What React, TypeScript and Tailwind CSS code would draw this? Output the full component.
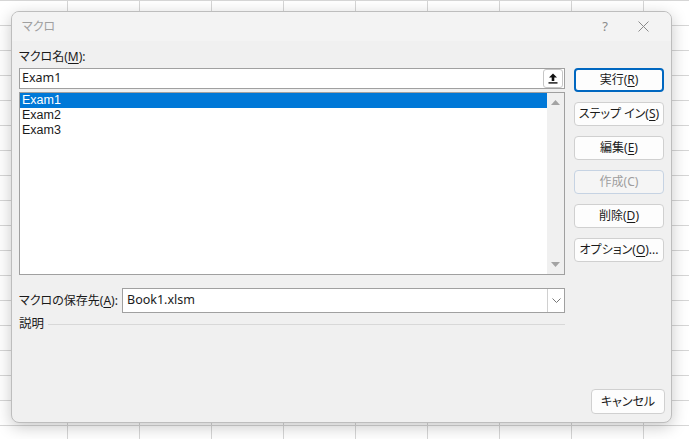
import React from 'react';

const MACROS = ['Exam1', 'Exam2', 'Exam3'];

const BUTTONS: { label: string; key?: string; tail?: string; disabled?: boolean; primary?: boolean }[] = [
  { label: '実行(', key: 'R', tail: ')', primary: true },
  { label: 'ステップ イン(', key: 'S', tail: ')' },
  { label: '編集(', key: 'E', tail: ')' },
  { label: '作成(C)', disabled: true },
  { label: '削除(', key: 'D', tail: ')' },
  { label: 'オプション(', key: 'O', tail: ')...' },
];

function DialogButton({ label, keyChar, tail, disabled, primary }: { label: string; keyChar?: string; tail?: string; disabled?: boolean; primary?: boolean }) {
  return (
    <button
      className={`h-[24px] w-[90px] rounded-[4px] text-[12px] leading-none flex items-center justify-center ${
        primary
          ? 'border-2 border-[#0067c0] bg-[#fdfdfd] text-[#1a1a1a]'
          : disabled
          ? 'border border-[#c6d3e3] bg-[#f5f5f5] text-[#9d9d9d]'
          : 'border border-[#d0d0d0] bg-[#fdfdfd] text-[#1a1a1a]'
      }`}
    >
      {label}
      {keyChar && <span className="underline underline-offset-2">{keyChar}</span>}
      {tail}
    </button>
  );
}

export default function App() {
  return (
    <div className="relative w-[689px] h-[439px] overflow-hidden bg-white bg-[linear-gradient(to_right,#d6d6d6_1px,transparent_1px),linear-gradient(to_bottom,#d6d6d6_1px,transparent_1px)] bg-[size:72px_25px] bg-[position:67px_0px] font-['Noto_Sans','Noto_Sans_CJK_JP',sans-serif] [font-feature-settings:'palt'] text-[#1a1a1a]">
      {/* Dialog window */}
      <div className="absolute left-[11px] top-[11px] w-[661px] h-[412px] rounded-[8px] border border-[#bdbdbd] bg-[#f0f0f0] shadow-[0_4px_16px_rgba(0,0,0,0.22)] flex flex-col overflow-hidden">
        {/* Title bar */}
        <div className="h-[29px] bg-[#f3f3f3] flex items-center pl-[10px] pr-[22px]">
          <span className="text-[12px] text-[#a0a0a0]">マクロ</span>
          <span className="ml-auto text-[13px] text-[#8a8a8a] mr-[30px]">?</span>
          <svg width="11" height="11" viewBox="0 0 11 11" className="text-[#8a8a8a]">
            <path d="M0.5 0.5L10.5 10.5M10.5 0.5L0.5 10.5" stroke="currentColor" strokeWidth="1" />
          </svg>
        </div>

        {/* Body */}
        <div className="flex">
          <div className="ml-[7px] w-[546px] flex flex-col">
            <div className="mt-[8px] h-[16px] text-[12px] leading-[16px]">
              マクロ名(<span className="underline underline-offset-2">M</span>):
            </div>
            {/* Name input */}
            <div className="mt-[3px] h-[21px] bg-white border border-[#a0a0a0] flex items-center pl-[2px] pr-[1px]">
              <span className="text-[12.5px] leading-none">Exam1</span>
              <div className="ml-auto w-[20px] h-[19px] rounded-[3px] border border-[#c6c6c6] bg-white flex items-center justify-center">
                <svg width="10" height="11" viewBox="0 0 10 11">
                  <path d="M5 0.5L9 4.5H6.3V8H3.7V4.5H1Z" fill="#111" />
                  <rect x="0.5" y="9.2" width="9" height="1.4" fill="#111" />
                </svg>
              </div>
            </div>
            {/* Macro list */}
            <div className="mt-[3px] h-[183px] bg-white border border-[#a0a0a0] flex">
              <div className="flex-1 flex flex-col">
                {MACROS.map((m, i) => (
                  <div
                    key={m}
                    className={`h-[15px] pl-[2px] flex items-center font-['Liberation_Sans',sans-serif] text-[12.5px] leading-none ${i === 0 ? 'bg-[#0078d7] text-white' : ''}`}
                  >
                    {m}
                  </div>
                ))}
              </div>
              <div className="w-[17px] bg-[#f0f0f0] flex flex-col items-center justify-between py-[7px]">
                <svg width="9" height="5" viewBox="0 0 9 5">
                  <path d="M4.5 0L9 5H0Z" fill="#a3a3a3" />
                </svg>
                <svg width="9" height="5" viewBox="0 0 9 5">
                  <path d="M0 0H9L4.5 5Z" fill="#a3a3a3" />
                </svg>
              </div>
            </div>
            {/* Storage location */}
            <div className="mt-[13px] flex items-center">
              <span className="w-[103px] text-[12px]">
                マクロの保存先(<span className="underline underline-offset-2">A</span>):
              </span>
              <div className="flex-1 h-[25px] bg-white border border-[#a0a0a0] flex items-center pl-[4px]">
                <span className="text-[12.5px] leading-none">Book1.xlsm</span>
                <div className="ml-auto w-[17px] h-[23px] border-l border-[#d0d0d0] flex items-center justify-center">
                  <svg width="9" height="5" viewBox="0 0 9 5">
                    <path d="M0.5 0.5L4.5 4.5L8.5 0.5" stroke="#777" strokeWidth="1" fill="none" />
                  </svg>
                </div>
              </div>
            </div>
            {/* Description */}
            <div className="mt-[3px] h-[16px] flex items-center">
              <span className="text-[12.5px] leading-[16px]">説明</span>
              <div className="ml-[4px] flex-1 h-px bg-[#d8d8d8]" />
            </div>
          </div>

          {/* Action buttons */}
          <div className="ml-[9px] mt-[27px] flex flex-col gap-[10px]">
            {BUTTONS.map((b) => (
              <DialogButton key={b.label} label={b.label} keyChar={b.key} tail={b.tail} disabled={b.disabled} primary={b.primary} />
            ))}
          </div>
        </div>

        {/* Footer */}
        <div className="mt-auto flex justify-end pr-[6px] pb-[8px]">
          <button className="h-[25px] w-[74px] rounded-[4px] border border-[#d0d0d0] bg-[#fdfdfd] text-[12px] leading-none">
            キャンセル
          </button>
        </div>
      </div>
    </div>
  );
}
